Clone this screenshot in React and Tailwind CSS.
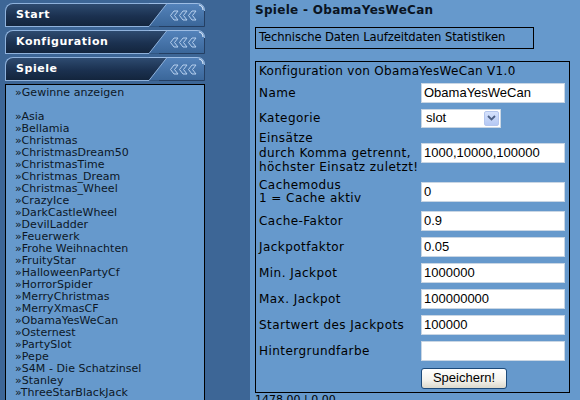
const games = [
  "Asia",
  "Bellamia",
  "Christmas",
  "ChristmasDream50",
  "ChristmasTime",
  "Christmas_Dream",
  "Christmas_Wheel",
  "CrazyIce",
  "DarkCastleWheel",
  "DevilLadder",
  "Feuerwerk",
  "Frohe Weihnachten",
  "FruityStar",
  "HalloweenPartyCf",
  "HorrorSpider",
  "MerryChristmas",
  "MerryXmasCF",
  "ObamaYesWeCan",
  "Osternest",
  "PartySlot",
  "Pepe",
  "S4M - Die Schatzinsel",
  "Stanley",
  "ThreeStarBlackJack",
  "Thunderstruck"
];

const fields = [
  { label: "Cache-Faktor", value: "0.9" },
  { label: "Jackpotfaktor", value: "0.05" },
  { label: "Min. Jackpot", value: "1000000" },
  { label: "Max. Jackpot", value: "100000000" },
  { label: "Startwert des Jackpots", value: "100000" },
  { label: "Hintergrundfarbe", value: "" }
];

function MenuHeader({ title }) {
  return (
    <div className="flex h-[24px] mb-[3px]">
      <div className="flex flex-1 items-center rounded-tl-[8px] border-l border-t border-b border-[#8fb2dc] bg-[linear-gradient(180deg,#2e4b70_0%,#1b3150_55%,#13253d_100%)] pl-[10px]">
        <span className="font-['DejaVu_Sans',sans-serif] text-[11px] font-bold tracking-[0.55px] text-white">{title}</span>
      </div>
      <svg width="56" height="24" viewBox="0 0 56 24" className="block">
        <defs>
          <linearGradient id="hdrDark" x1="0" y1="0" x2="0" y2="1">
            <stop offset="0" stopColor="#2e4b70" />
            <stop offset="0.55" stopColor="#1b3150" />
            <stop offset="1" stopColor="#13253d" />
          </linearGradient>
          <linearGradient id="hdrLight" x1="0" y1="0" x2="0" y2="1">
            <stop offset="0" stopColor="#5483bb" />
            <stop offset="1" stopColor="#3a6699" />
          </linearGradient>
        </defs>
        <rect x="0" y="0.5" width="20" height="23" fill="url(#hdrDark)" />
        <path d="M0 23.5 L18 0.5 L48 0.5 Q55.5 0.5 55.5 8 L55.5 23.5 Z" fill="url(#hdrLight)" />
        <path d="M0 0.5 L48 0.5 Q55.5 0.5 55.5 8" fill="none" stroke="#9dbde4" strokeWidth="1" />
        <path d="M0 23.5 L18 0.5" fill="none" stroke="#8fb2dc" strokeWidth="1" />
        <path d="M55.5 8 L55.5 23.5 L10 23.5" fill="none" stroke="#243f63" strokeWidth="1" />
        <path d="M50 2 Q54 3 54 7" fill="none" stroke="#d6e6f8" strokeWidth="1.2" />
        {[21, 30, 39].map((x) => (
          <polygon
            key={x}
            points={`${x + 4},8 ${x + 8},8 ${x + 4.5},12.5 ${x + 8},17 ${x + 4},17 ${x + 0.5},12.5`}
            fill="#4a78ae"
            stroke="#b7d0ee"
            strokeWidth="1"
          />
        ))}
      </svg>
    </div>
  );
}

function TextField({ value }) {
  return (
    <div className="flex h-[20px] w-[144px] items-center border border-[#c9d6e4] bg-white px-[2px] font-['Liberation_Sans',sans-serif] text-[13px] tracking-normal text-black">
      {value}
    </div>
  );
}

export default function App() {
  return (
    <div className="flex h-[400px] w-[580px] overflow-hidden bg-[#3d6696]">
      <div className="ml-[5px] w-[200px] shrink-0 pt-[3px]">
        <MenuHeader title="Start" />
        <MenuHeader title="Konfiguration" />
        <div className="mb-[1px]">
          <MenuHeader title="Spiele" />
        </div>
        <div className="h-[400px] border border-black bg-[#6699cc] pl-[9px] pt-[2px] font-['DejaVu_Sans',sans-serif] text-[11px] leading-[12px] tracking-[0.05px] text-[#0c1726]">
          <div>»Gewinne anzeigen</div>
          <div className="h-[12px]" />
          {games.map((game) => (
            <div key={game} className="whitespace-nowrap">»{game}</div>
          ))}
        </div>
      </div>

      <div className="ml-[45px] flex-1 bg-[#6699cc] pl-[5px] pt-[3px] font-['DejaVu_Sans',sans-serif] text-[12px] tracking-[0.45px] text-black">
        <h1 className="h-[14px] text-[12px] font-bold leading-[14px] tracking-[0.3px] text-[#0a1422]">Spiele - ObamaYesWeCan</h1>

        <div className="mt-[10px] inline-flex h-[22px] w-[279px] items-center border border-black pl-[3px] text-[11.6px] tracking-[-0.1px]">
          Technische Daten Laufzeitdaten Statistiken
        </div>

        <div className="mt-[12px] w-[315px] border border-black pl-[3px]">
          <div className="flex h-[18px] items-center tracking-[0.3px]">Konfiguration von ObamaYesWeCan V1.0</div>

          <div className="flex h-[26px] items-center">
            <div className="w-[162px]">Name</div>
            <TextField value="ObamaYesWeCan" />
          </div>

          <div className="flex h-[24px] items-center">
            <div className="w-[162px]">Kategorie</div>
            <div className="flex h-[19px] w-[80px] items-center justify-between border border-[#c9d6e4] bg-white pl-[4px] pr-[1px] font-['Liberation_Sans',sans-serif] text-[13px] tracking-normal">
              <span>slot</span>
              <span className="flex h-[15px] w-[15px] items-center justify-center rounded-[2px] border border-[#b4c6ee] bg-[linear-gradient(180deg,#d6e2fc_0%,#b4c8f4_100%)]">
                <svg width="9" height="6" viewBox="0 0 9 6">
                  <path d="M1 1 L4.5 4.5 L8 1" fill="none" stroke="#4d6185" strokeWidth="1.8" />
                </svg>
              </span>
            </div>
          </div>

          <div className="flex h-[46px] items-center">
            <div className="w-[162px] whitespace-nowrap leading-[14.5px]">
              Einsätze
              <br />
              durch Komma getrennt,
              <br />
              höchster Einsatz zuletzt!
            </div>
            <TextField value="1000,10000,100000" />
          </div>

          <div className="flex h-[32px] items-center">
            <div className="w-[162px] leading-[13.5px]">
              Cachemodus
              <br />1 = Cache aktiv
            </div>
            <TextField value="0" />
          </div>

          {fields.map((field) => (
            <div key={field.label} className="flex h-[26px] items-center">
              <div className="w-[162px] whitespace-nowrap">{field.label}</div>
              <TextField value={field.value} />
            </div>
          ))}

          <div className="flex h-[28px] items-center">
            <div className="w-[162px]" />
            <button className="flex h-[21px] w-[86px] items-center justify-center rounded-[3px] border border-[#1c4a7a] bg-[linear-gradient(180deg,#ffffff_0%,#f3f2ec_60%,#dcd9cc_100%)] font-['Liberation_Sans',sans-serif] text-[13px] tracking-normal text-black">
              Speichern!
            </button>
          </div>
        </div>

        <div className="mt-[1px] text-[11px] leading-[12px] tracking-normal">1478,00 | 0,00</div>
      </div>
    </div>
  );
}
